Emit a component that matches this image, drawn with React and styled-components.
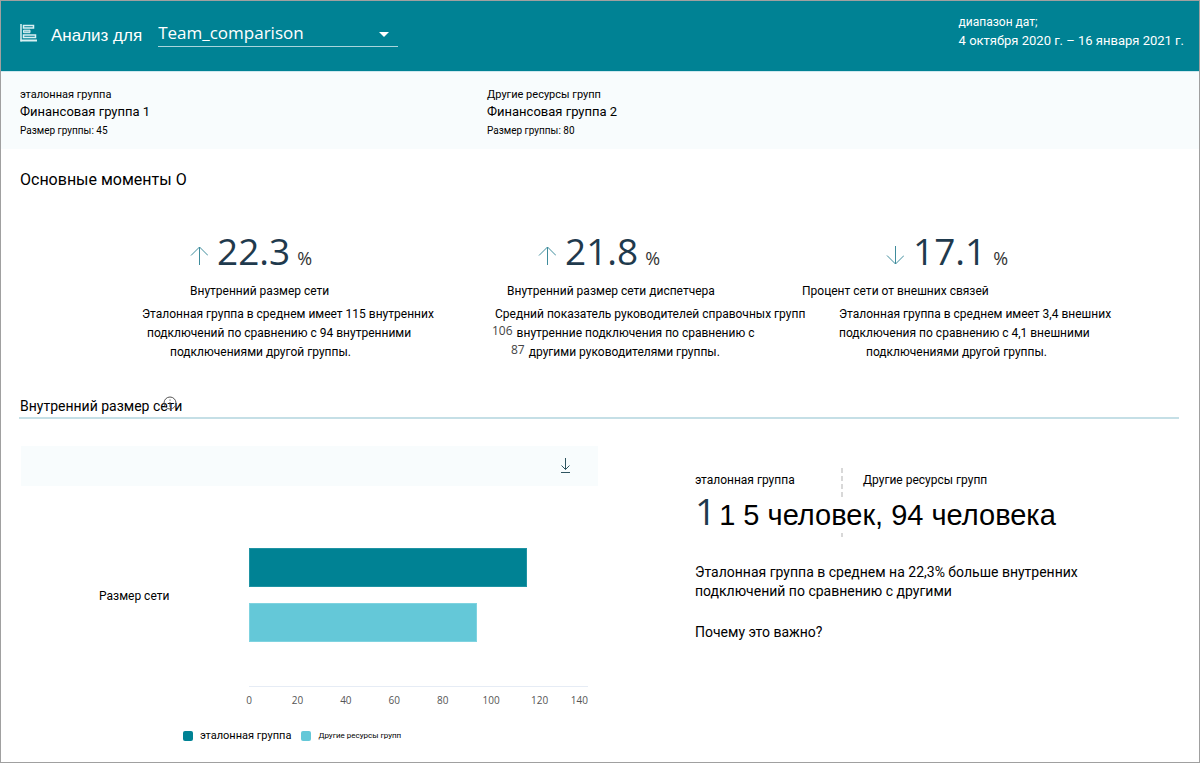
import React from "react";
import styled, { createGlobalStyle } from "styled-components";

const GlobalStyle = createGlobalStyle`
  * { box-sizing: border-box; }
  body { margin: 0; background: #fff; color: #000; font-family: Roboto, "Noto Sans", sans-serif; }
  h1, h2, h3, p, dl, dd, dt, ul { margin: 0; padding: 0; font-weight: 400; }
`;

const latin = `"Open Sans", "Noto Sans", sans-serif`;
const display = `"Liberation Sans", Arial, sans-serif`;

const Page = styled.div`
  min-height: 100vh;
  border: 1px solid #a0a0a0;
  display: flex;
  flex-direction: column;
`;

const Header = styled.header`
  display: flex;
  justify-content: space-between;
  height: 71px;
  padding: 0 15px 0 19px;
  background: #008294;
  border-bottom: 1px solid #cfe8ef;
  color: #fff;
`;

const Brand = styled.div`
  display: flex;
  align-items: flex-start;
  padding-top: 20px;
`;

const BrandIcon = styled.svg`
  width: 18px;
  height: 22px;
  margin-right: 13px;
`;

const BrandLabel = styled.label`
  font-family: ${display};
  font-size: 17px;
  line-height: 30px;
  margin-right: 16px;
`;

const SelectWrap = styled.div`
  position: relative;
  width: 240px;
`;

const QuerySelect = styled.select`
  appearance: none;
  display: block;
  width: 100%;
  height: 26px;
  padding: 0 32px 2px 0;
  border: 0;
  border-bottom: 1px solid #a9d5dc;
  border-radius: 0;
  background: transparent;
  color: #fff;
  font-family: ${latin};
  font-size: 17px;
  line-height: 24px;
`;

const Caret = styled.svg`
  position: absolute;
  right: 9px;
  top: 11px;
  width: 10px;
  height: 5px;
  pointer-events: none;
`;

const DateRange = styled.div`
  padding-top: 12px;
`;

const DateCaption = styled.p`
  font-size: 12px;
  line-height: 18px;
`;

const DateValue = styled.p`
  font-size: 13px;
  line-height: 20px;
`;

const Groups = styled.section`
  display: grid;
  grid-template-columns: 467fr 693fr;
  padding: 15px 19px 9px;
  background: #f8fcfd;
`;

const GroupCaption = styled.p`
  font-size: 11px;
  line-height: 15px;
`;

const GroupName = styled.h2`
  font-size: 13px;
  line-height: 19px;
`;

const GroupSize = styled.p`
  font-size: 10px;
  line-height: 19px;
`;

const PageTitle = styled.h1`
  padding: 21px 19px 0;
  font-size: 16px;
  line-height: 20px;
`;

const Metrics = styled.section`
  display: grid;
  grid-template-columns: 350fr 310fr 397fr;
  padding: 35px 0 0 141px;
`;

const Metric = styled.article`
  min-width: 0;
  white-space: nowrap;
`;

const MetricValue = styled.div`
  display: flex;
  align-items: baseline;
  height: 56px;
  padding-left: ${(p) => p.$indent}px;
  color: #1f3a4d;
  font-family: ${latin};
`;

const Arrow = styled.svg`
  width: 18px;
  height: 19px;
  margin-right: 9px;
`;

const MetricNumber = styled.span`
  font-size: 37px;
  line-height: 51px;
  font-weight: 400;
`;

const MetricUnit = styled.span`
  margin-left: 7px;
  font-size: 18px;
  color: #333;
`;

const MetricName = styled.h3`
  padding-left: ${(p) => p.$indent}px;
  font-size: 12px;
  line-height: 20px;
  margin-bottom: 4px;
`;

const MetricLine = styled.p`
  padding-left: ${(p) => p.$indent}px;
  font-size: 12px;
  line-height: 19px;
`;

const Inset = styled.span`
  margin-right: 4px;
  font-family: ${latin};
  line-height: 1;
  vertical-align: 2px;
  color: #444;
`;

const SectionHead = styled.div`
  display: flex;
  margin: 34px 20px 0 18px;
  border-bottom: 2px solid #c5dfe6;
`;

const SectionTitle = styled.h2`
  position: relative;
  padding: 0 0 1px 1px;
  font-size: 14px;
  line-height: 20px;
`;

const InfoButton = styled.button`
  position: absolute;
  right: 5px;
  top: 0;
  width: 14px;
  height: 14px;
  padding: 0;
  border: 0;
  background: transparent;

  svg { display: block; }
`;

const Detail = styled.section`
  display: grid;
  grid-template-columns: 577fr 484fr;
  column-gap: 97px;
  padding: 27px 20px 0 20px;
`;

const Toolbar = styled.div`
  display: flex;
  justify-content: flex-end;
  align-items: center;
  height: 40px;
  padding-right: 25px;
  background: #f8fcfd;
`;

const IconButton = styled.button`
  width: 16px;
  height: 18px;
  padding: 0;
  border: 0;
  background: transparent;

  svg { display: block; }
`;

const Chart = styled.div`
  display: grid;
  grid-template-columns: 150px 1fr;
  padding: 62px 10px 0 78px;
`;

const Category = styled.div`
  padding-top: 38px;
  font-size: 12px;
  line-height: 20px;
`;

const Bars = styled.div`
  display: flex;
  flex-direction: column;
  gap: 16px;
  height: 139px;
  border-bottom: 1px solid #e6ecf5;
`;

const Bar = styled.div`
  height: 39px;
  background: ${(p) => p.$color};
  border: 1px solid ${(p) => p.$edge};
`;

const Axis = styled.div`
  grid-column: 2;
  display: grid;
  grid-template-columns: repeat(7, 1fr);
  padding-top: 4px;
  font-family: ${latin};
  font-size: 10px;
  line-height: 18px;
  color: #555;
`;

const TickCell = styled.div`
  display: flex;
  justify-content: space-between;
`;

const Tick = styled.span`
  width: 24px;
  margin-left: -12px;
  text-align: center;
`;

const LastTick = styled.span`
  text-align: right;
`;

const Legend = styled.ul`
  display: flex;
  align-items: center;
  gap: 10px;
  padding: 18px 0 15px 162px;
  list-style: none;
`;

const LegendItem = styled.li`
  display: flex;
  align-items: center;
  gap: 7px;
  font-size: ${(p) => (p.$small ? 8 : 11)}px;
  line-height: 18px;
`;

const Swatch = styled.span`
  width: 10px;
  height: 10px;
  border-radius: 2px;
  background: ${(p) => p.$color};
`;

const Summary = styled.div`
  padding-top: 22px;
`;

const Compare = styled.div`
  position: relative;
  height: 70px;
`;

const Divider = styled.div`
  position: absolute;
  left: 146px;
  top: 0;
  width: 2px;
  height: 70px;
  background: repeating-linear-gradient(#d8d8d8 0 5px, transparent 5px 8px);
`;

const CompareLabels = styled.div`
  display: grid;
  grid-template-columns: 168px 1fr;
  padding-top: 2px;
  font-size: 12px;
  line-height: 20px;
`;

const CompareValue = styled.p`
  position: relative;
  display: flex;
  align-items: baseline;
  gap: 3px;
  height: 34px;
  margin-top: 9px;
  background: #fff;
  font-family: ${display};
  font-size: 29px;
  line-height: 24px;
  white-space: nowrap;
`;

const LeadDigit = styled.span`
  font-family: ${latin};
  font-size: 37px;
  font-weight: 400;
  color: #1f3a4d;
`;

const SummaryText = styled.p`
  max-width: 420px;
  margin-top: 25px;
  font-size: 14px;
  line-height: 19px;
`;

const WhyLink = styled.a`
  display: inline-block;
  margin-top: 22px;
  font-size: 14px;
  line-height: 19px;
  color: inherit;
  text-decoration: none;
`;

const groups = [
  { caption: "эталонная группа", name: "Финансовая группа 1", size: "Размер группы: 45" },
  { caption: "Другие ресурсы групп", name: "Финансовая группа 2", size: "Размер группы: 80" },
];

const metrics = [
  {
    value: "22.3", up: true, indent: 48, name: "Внутренний размер сети", nameIndent: 48,
    lines: [
      { indent: 0, text: "Эталонная группа в среднем имеет 115 внутренних" },
      { indent: 5, text: "подключений по сравнению с 94 внутренними" },
      { indent: 28, text: "подключениями другой группы." },
    ],
  },
  {
    value: "21.8", up: true, indent: 46, name: "Внутренний размер сети диспетчера", nameIndent: 15,
    lines: [
      { indent: 3, text: "Средний показатель руководителей справочных групп" },
      { indent: 0, inset: "106", text: "внутренние подключения по сравнению с" },
      { indent: 19, inset: "87", text: "другими руководителями группы." },
    ],
  },
  {
    value: "17.1", up: false, indent: 84, name: "Процент сети от внешних связей", nameIndent: 0,
    lines: [
      { indent: 37, text: "Эталонная группа в среднем имеет 3,4 внешних" },
      { indent: 37, text: "подключения по сравнению с 4,1 внешними" },
      { indent: 64, text: "подключениями другой группы." },
    ],
  },
];

const series = [
  { name: "эталонная группа", value: 115, color: "#008294", edge: "#1f93a3" },
  { name: "Другие ресурсы групп", value: 94, color: "#64c8d8", edge: "#7fd3e0", small: true },
];

const axisMax = 140;
const ticks = [0, 20, 40, 60, 80, 100, 120];

export default function App() {
  return (
    <>
      <GlobalStyle />
      <Page>
        <Header>
          <Brand>
            <BrandIcon viewBox="0 0 18 22" fill="none" stroke="#d9f0f3" aria-hidden="true">
              <path d="M1 3v17.500" strokeWidth="1.500" />
              <path d="M0.500 19.500h16.500" strokeWidth="2" />
              <path d="M3.500 4.500h10v2.500h-10zM3.500 14h12v2.500h-12z" strokeWidth="1.500" />
              <path d="M3.500 9.200h6.500v2.500h-6.500z" fill="#8fc9d1" />
            </BrandIcon>
            <BrandLabel htmlFor="query">Анализ для</BrandLabel>
            <SelectWrap>
              <QuerySelect id="query" defaultValue="Team_comparison">
                <option>Team_comparison</option>
              </QuerySelect>
              <Caret viewBox="0 0 10 5" fill="#fff" aria-hidden="true">
                <path d="M0 0h10L5 5z" />
              </Caret>
            </SelectWrap>
          </Brand>
          <DateRange>
            <DateCaption>диапазон дат;</DateCaption>
            <DateValue>4 октября 2020 г. – 16 января 2021 г.</DateValue>
          </DateRange>
        </Header>

        <Groups>
          {groups.map((g) => (
            <div key={g.name}>
              <GroupCaption>{g.caption}</GroupCaption>
              <GroupName>{g.name}</GroupName>
              <GroupSize>{g.size}</GroupSize>
            </div>
          ))}
        </Groups>

        <PageTitle>Основные моменты О</PageTitle>

        <Metrics>
          {metrics.map((m) => (
            <Metric key={m.value}>
              <MetricValue $indent={m.indent}>
                <Arrow viewBox="0 0 18 19" fill="none" stroke="#3f8c9c" aria-hidden="true">
                  {m.up ? <path d="M9.5 19V1M1 9.5L9.5 1L18 9.5" /> : <path d="M9.5 0v18M1 9.5L9.5 18L18 9.5" />}
                </Arrow>
                <MetricNumber>{m.value}</MetricNumber>
                <MetricUnit>%</MetricUnit>
              </MetricValue>
              <MetricName $indent={m.nameIndent}>{m.name}</MetricName>
              {m.lines.map((l) => (
                <MetricLine key={l.text} $indent={l.indent}>
                  {l.inset && <Inset>{l.inset}</Inset>}
                  {l.text}
                </MetricLine>
              ))}
            </Metric>
          ))}
        </Metrics>

        <SectionHead>
          <SectionTitle>
            Внутренний размер сети
            <InfoButton type="button" aria-label="Сведения">
              <svg width="14" height="14" viewBox="0 0 14 14" fill="none" stroke="#555">
                <circle cx="7" cy="7" r="6" />
                <path d="M7 6v5M7 3.5v1.2" />
              </svg>
            </InfoButton>
          </SectionTitle>
        </SectionHead>

        <Detail>
          <div>
            <Toolbar>
              <IconButton type="button" aria-label="Скачать">
                <svg width="16" height="18" viewBox="0 0 16 18" fill="none" stroke="#2f5560">
                  <path d="M8.5 1v11.500M4.500 8.500l4 4 4-4M4 15.500h9" />
                </svg>
              </IconButton>
            </Toolbar>
            <Chart>
              <Category>Размер сети</Category>
              <Bars>
                {series.map((s) => (
                  <Bar
                    key={s.name}
                    $color={s.color}
                    $edge={s.edge}
                    style={{ width: `${(s.value / axisMax) * 100}%` }}
                  />
                ))}
              </Bars>
              <Axis>
                {ticks.map((t) => (
                  <TickCell key={t}>
                    <Tick>{t}</Tick>
                    {t === 120 && <LastTick>{axisMax}</LastTick>}
                  </TickCell>
                ))}
              </Axis>
            </Chart>
            <Legend>
              {series.map((s) => (
                <LegendItem key={s.name} $small={s.small}>
                  <Swatch $color={s.color} />
                  {s.name}
                </LegendItem>
              ))}
            </Legend>
          </div>

          <Summary>
            <Compare>
              <Divider />
              <CompareLabels>
                <span>эталонная группа</span>
                <span>Другие ресурсы групп</span>
              </CompareLabels>
              <CompareValue>
                <LeadDigit>1</LeadDigit>
                <span>1 5 человек, 94 человека</span>
              </CompareValue>
            </Compare>
            <SummaryText>
              Эталонная группа в среднем на 22,3% больше внутренних подключений по сравнению с другими
            </SummaryText>
            <WhyLink href="#why">Почему это важно?</WhyLink>
          </Summary>
        </Detail>
      </Page>
    </>
  );
}
